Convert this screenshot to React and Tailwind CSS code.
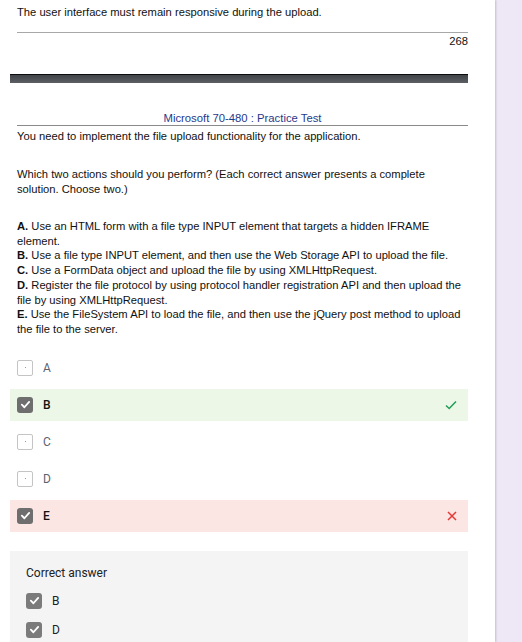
import React from "react";

function Unchecked() {
  return (
    <div className="w-4 h-4 rounded-[2px] border-[1.5px] border-[#c4c4c4] flex items-center justify-center bg-white">
      <div className="w-[1px] h-[1px] bg-[#9a9a9a]" />
    </div>
  );
}

function Checked({ light }) {
  return (
    <div className={`w-4 h-4 rounded-[3px] flex items-center justify-center ${light ? "bg-[#7b7b7b]" : "bg-[#6e6e6e]"}`}>
      <svg width="11" height="11" viewBox="0 0 12 12" fill="none">
        <path d="M2 6.2 L4.8 9 L10 3.2" stroke="white" strokeWidth="2" strokeLinecap="round" strokeLinejoin="round" />
      </svg>
    </div>
  );
}

function Row({ letter, state }) {
  const bg = state === "right" ? "bg-[#edf7e8]" : state === "wrong" ? "bg-[#fce6e4]" : "";
  const checked = state === "right" || state === "wrong";
  return (
    <div className={`h-8 flex items-center pl-[7px] pr-[11px] ${bg}`}>
      {checked ? <Checked /> : <Unchecked />}
      <span className={`ml-[10px] text-[12px] leading-none ${checked ? "text-[#111] font-medium" : "text-[#5c6370]"}`}>{letter}</span>
      <div className="flex-1" />
      {state === "right" && (
        <svg width="12" height="10" viewBox="0 0 12 10" fill="none">
          <path d="M1 5.5 L4.2 8.5 L11 1.5" stroke="#1f9d55" strokeWidth="1.5" />
        </svg>
      )}
      {state === "wrong" && (
        <svg width="10" height="10" viewBox="0 0 10 10" fill="none">
          <path d="M1 1 L9 9 M9 1 L1 9" stroke="#e53935" strokeWidth="1.5" />
        </svg>
      )}
    </div>
  );
}

export default function App() {
  const arial = { fontFamily: '"Liberation Sans", Arial, sans-serif' };
  return (
    <div className="w-[522px] h-[642px] overflow-hidden flex bg-[#ede7f6]">
      <div className="w-[495px] h-full bg-white shadow-[1px_0_2px_rgba(0,0,0,0.18)] shrink-0">
        <div className="ml-[10px] w-[458px]" >
          <div className="pl-[7px] text-[11.2px] leading-[14px] text-[#111] pt-[5px]" style={arial}>
            The user interface must remain responsive during the upload.
          </div>
          <div className="ml-[7px] mt-[13px] border-t border-[#a8a8a8]" />
          <div className="mt-[1px] text-right text-[11.2px] leading-[14px] text-[#111]" style={arial}>268</div>
          <div className="mt-[26px] h-[9px] border-t border-[#0d0d0d] bg-gradient-to-b from-[#404348] to-[#5c5f64]" />
          <div className="ml-[7px] mt-[29px] text-center text-[11.3px] leading-[13px] text-[#1f3a8c] border-b border-[#8a8a8a]" style={arial}>
            Microsoft 70-480 : Practice Test
          </div>
          <div className="pl-[7px] text-[11.2px] text-[#111]" style={arial}>
            <div className="mt-[3px] leading-[14px]">You need to implement the file upload functionality for the application.</div>
            <div className="mt-[24px] leading-[14.5px] whitespace-nowrap">
              Which two actions should you perform? (Each correct answer presents a complete<br />
              solution. Choose two.)
            </div>
            <div className="mt-[23px] leading-[14.7px] whitespace-nowrap">
              <b>A.</b> Use an HTML form with a file type INPUT element that targets a hidden IFRAME<br />
              element.<br />
              <b>B.</b> Use a file type INPUT element, and then use the Web Storage API to upload the file.<br />
              <b>C.</b> Use a FormData object and upload the file by using XMLHttpRequest.<br />
              <b>D.</b> Register the file protocol by using protocol handler registration API and then upload the<br />
              file by using XMLHttpRequest.<br />
              <b>E.</b> Use the FileSystem API to load the file, and then use the jQuery post method to upload<br />
              the file to the server.
            </div>
          </div>
          <div className="mt-[15px] flex flex-col gap-[5px]" style={{ fontFamily: 'Roboto, "Liberation Sans", sans-serif' }}>
            <Row letter="A" />
            <Row letter="B" state="right" />
            <Row letter="C" />
            <Row letter="D" />
            <Row letter="E" state="wrong" />
          </div>
          <div className="mt-[19px] bg-[#f4f4f4] h-[120px] pl-[16px] pt-[14px]" style={{ fontFamily: 'Roboto, "Liberation Sans", sans-serif' }}>
            <div className="text-[12px] leading-[16px] text-[#202124]">Correct answer</div>
            <div className="mt-[12px] flex flex-col gap-[13px]">
              <div className="flex items-center h-4">
                <Checked light />
                <span className="ml-[10px] text-[12px] text-[#202124]">B</span>
              </div>
              <div className="flex items-center h-4">
                <Checked light />
                <span className="ml-[10px] text-[12px] text-[#202124]">D</span>
              </div>
            </div>
          </div>
        </div>
      </div>
      <div className="flex-1" />
    </div>
  );
}
